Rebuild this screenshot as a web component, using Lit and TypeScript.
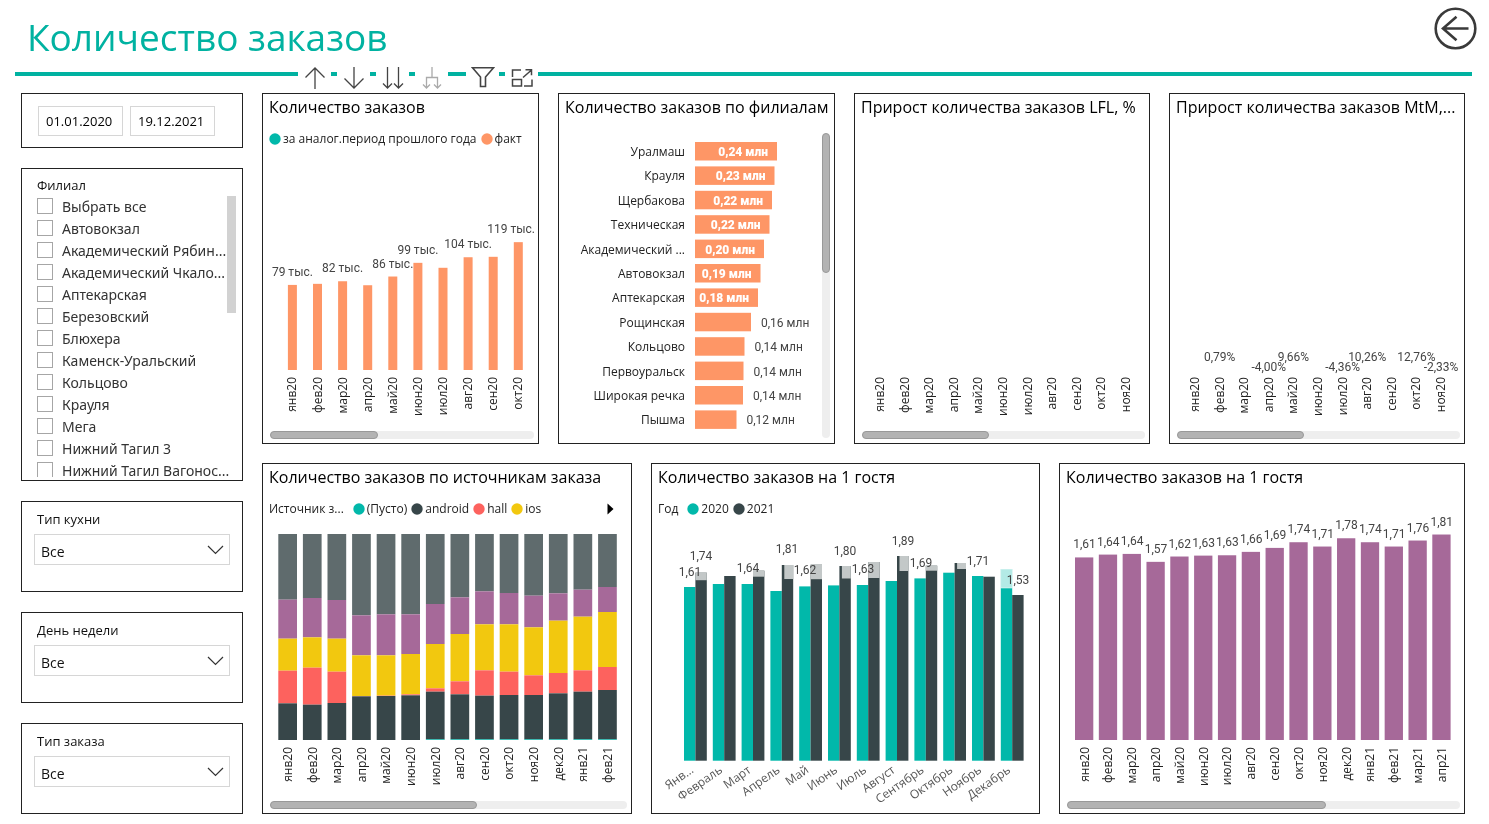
import { LitElement, html, svg, css, nothing } from "lit";
import { customElement, property } from "lit/decorators.js";
import { styleMap } from "lit/directives/style-map.js";

const MONTHS = [
  "янв20", "фев20", "мар20", "апр20", "май20", "июн20", "июл20", "авг20",
  "сен20", "окт20", "ноя20", "дек20", "янв21", "фев21", "мар21", "апр21",
];

const TEAL = "#01b8aa";
const DARK = "#374649";
const RED = "#fd625e";
const YELLOW = "#f2c80f";
const GRAY = "#5f6b6d";
const PURPLE = "#a66999";
const ORANGE = "#fe9666";

const BRANCHES = [
  "Выбрать все", "Автовокзал", "Академический Рябин...", "Академический Чкало...",
  "Аптекарская", "Березовский", "Блюхера", "Каменск-Уральский", "Кольцово",
  "Крауля", "Мега", "Нижний Тагил 3", "Нижний Тагил Вагонос...",
];

const ORDERS = [79, 80, 82.4, 78.7, 86.8, 99.5, 94.9, 104.7, 105.1, 118.7];
const ORDER_LABELS: Record<number, string> = {
  0: "79 тыс.", 2: "82 тыс.", 4: "86 тыс.", 5: "99 тыс.", 7: "104 тыс.", 9: "119 тыс.",
};

const BY_BRANCH: [string, string, number][] = [
  ["Уралмаш", "0,24 млн", 82], ["Крауля", "0,23 млн", 79.5], ["Щербакова", "0,22 млн", 77],
  ["Техническая", "0,22 млн", 74.5], ["Академический ...", "0,20 млн", 69],
  ["Автовокзал", "0,19 млн", 65.5], ["Аптекарская", "0,18 млн", 63], ["Рощинская", "0,16 млн", 56],
  ["Кольцово", "0,14 млн", 49.5], ["Первоуральск", "0,14 млн", 48.5],
  ["Широкая речка", "0,14 млн", 48], ["Пышма", "0,12 млн", 41.5],
];

const MTM: Record<number, string> = {
  1: "0,79%", 3: "-4,00%", 4: "9,66%", 6: "-4,36%", 7: "10,26%", 9: "12,76%", 10: "-2,33%",
};

const SOURCE_COLORS = [GRAY, PURPLE, YELLOW, RED, DARK, TEAL];
const SOURCES = [
  [197, 117, 96, 98, 110, 0], [192, 118, 91, 111, 106, 0], [198, 116, 99, 94, 111, 0],
  [244, 120, 122, 1, 131, 0], [241, 123, 121, 1, 132, 0], [241, 119, 121, 3, 134, 0],
  [210, 120, 133, 10, 143, 2], [190, 110, 142, 39, 135, 2], [172, 99, 138, 76, 131, 2],
  [177, 94, 142, 70, 133, 2], [185, 95, 144, 59, 133, 2], [178, 82, 157, 61, 138, 2],
  [167, 81, 161, 64, 143, 2], [159, 75, 165, 69, 148, 2],
];

interface YearPair {
  month: string;
  prev: number;
  cur: number;
  fade?: number;
  sliver?: boolean;
}
const YEARS: YearPair[] = [
  { month: "Янв...", prev: 173.7, cur: 188, fade: 7.5 },
  { month: "Февраль", prev: 176.7, cur: 184.7 },
  { month: "Март", prev: 176.7, cur: 190, fade: 6 },
  { month: "Апрель", prev: 169.7, cur: 195.7, fade: 14, sliver: true },
  { month: "Май", prev: 174.3, cur: 196, fade: 14.5 },
  { month: "Июнь", prev: 175.3, cur: 194.7, fade: 12.5, sliver: true },
  { month: "Июль", prev: 175.7, cur: 198.7, fade: 16 },
  { month: "Август", prev: 179.7, cur: 204.7, fade: 15, sliver: true },
  { month: "Сентябрь", prev: 182.3, cur: 195, fade: 5 },
  { month: "Октябрь", prev: 188, cur: 197.7, fade: 6, sliver: true },
  { month: "Ноябрь", prev: 184.7, cur: 184 },
  { month: "Декабрь", prev: 191.7, cur: 165.7 },
];
const YEAR_LABELS: [string, number, number][] = [
  ["1,61", 38, 53], ["1,74", 49, 37], ["1,64", 96, 49], ["1,81", 135, 30], ["1,62", 153, 51],
  ["1,80", 193, 32], ["1,63", 211, 50], ["1,89", 251, 22], ["1,69", 269, 44], ["1,71", 326, 42],
  ["1,53", 366, 61],
];

const PER_GUEST = [
  1.61, 1.635, 1.641, 1.571, 1.618, 1.626, 1.629, 1.659, 1.694, 1.744, 1.706, 1.779, 1.744, 1.706,
  1.759, 1.812,
];
const PER_GUEST_LABELS = [
  "1,61", "1,64", "1,64", "1,57", "1,62", "1,63", "1,63", "1,66", "1,69", "1,74", "1,71", "1,78",
  "1,74", "1,71", "1,76", "1,81",
];

const monthAxis = (count: number, first: number, step: number, y: number) =>
  MONTHS.slice(0, count).map((m, i) => {
    const x = first + i * step + 4;
    return svg`<text class="axis" text-anchor="end" transform="translate(${x} ${y}) rotate(-90)">${m}</text>`;
  });

@customElement("chart-panel")
export class ChartPanel extends LitElement {
  @property() heading = "";
  @property({ type: Number }) thumb = 0;

  static styles = css`
    :host {
      display: flex;
      flex-direction: column;
      min-width: 0;
      min-height: 351px;
      box-sizing: border-box;
      border: 1px solid #222;
      background: #fff;
    }
    .heading {
      margin: 0;
      padding: 0 2px 0 6px;
      font-size: 16px;
      font-weight: 400;
      line-height: 26px;
      white-space: nowrap;
      overflow: hidden;
      text-overflow: ellipsis;
      color: #000;
    }
    .body {
      flex: 1;
      min-height: 0;
    }
    .track {
      height: 8px;
      margin: 0 4px 4px 7px;
      border-radius: 4px;
      background: #eee;
    }
    .thumb {
      height: 8px;
      box-sizing: border-box;
      border: 1px solid #999;
      border-radius: 4px;
      background: #b3b3b3;
    }
  `;

  render() {
    return html`
      <h2 class="heading">${this.heading}</h2>
      <div class="body"><slot></slot></div>
      ${this.thumb
        ? html`<div class="track">
            <div class="thumb" style=${styleMap({ width: `${this.thumb}%` })}></div>
          </div>`
        : nothing}
    `;
  }
}

@customElement("app-root")
export class AppRoot extends LitElement {
  static styles = css`
    :host {
      display: block;
      background: #fff;
      color: #000;
      font-family: "Open Sans", "Noto Sans", sans-serif;
    }
    * {
      box-sizing: border-box;
    }
    button {
      padding: 0;
      border: 0;
      background: none;
      cursor: pointer;
    }
    svg {
      display: block;
    }
    .head {
      display: flex;
      justify-content: space-between;
      align-items: flex-start;
      height: 66px;
      padding: 7px 12px 0 27px;
    }
    .title {
      margin: 0;
      font-size: 37px;
      font-weight: 400;
      line-height: 60px;
      color: #00b2a1;
      white-space: nowrap;
    }
    .back {
      width: 43px;
      height: 43px;
    }
    .tools {
      display: flex;
      align-items: flex-start;
      height: 27px;
      padding: 0 17px 0 15px;
    }
    .rule {
      width: 6px;
      height: 4px;
      margin-top: 6px;
      background: #00b2a1;
    }
    .rule.lead {
      width: 283px;
    }
    .rule.wide {
      width: 18px;
    }
    .rule.fill {
      flex: 1;
    }
    .tool {
      display: flex;
      justify-content: center;
      width: 33px;
      height: 24px;
    }
    .layout {
      display: grid;
      grid-template-columns: 222px minmax(0, 1fr);
      gap: 19px;
      padding: 0 24px 10px 21px;
    }
    .side {
      display: flex;
      flex-direction: column;
      gap: 20px;
    }
    .card {
      border: 1px solid #222;
      background: #fff;
    }
    .dates {
      display: flex;
      gap: 7px;
      padding: 12px 16px 11px;
    }
    .date {
      width: 85px;
      height: 30px;
      padding: 0 7px;
      border: 1px solid #d6d6d6;
      font: 13px "Open Sans", "Noto Sans", sans-serif;
      color: #000;
      background: #fff;
    }
    .branches {
      position: relative;
      height: 313px;
      padding: 8px 4px 3px 15px;
    }
    .branches fieldset {
      height: 100%;
      margin: 0;
      padding: 0;
      border: 0;
      min-width: 0;
      overflow: hidden;
    }
    .caption {
      display: block;
      padding: 0;
      font-size: 13px;
      line-height: 16px;
      color: #111;
    }
    .options {
      padding-top: 3px;
    }
    .option {
      display: flex;
      align-items: center;
      gap: 9px;
      height: 22px;
      font-family: "Noto Sans", "Open Sans", sans-serif;
      font-size: 14px;
      line-height: 22px;
      color: #333;
      white-space: nowrap;
    }
    .option input {
      appearance: none;
      flex: none;
      width: 16px;
      height: 16px;
      margin: 0 0 2px;
      border: 1px solid #a6a6a6;
      background: #fff;
    }
    .grip {
      position: absolute;
      top: 27px;
      right: 6px;
      width: 9px;
      height: 117px;
      background: #d2d2d2;
      mix-blend-mode: multiply;
    }
    .filter {
      height: 91px;
      padding: 9px 12px 0;
    }
    .filter .caption {
      padding: 0 3px;
    }
    .picker {
      display: grid;
      align-items: center;
      margin-top: 7px;
    }
    .picker select,
    .picker svg {
      grid-area: 1 / 1;
    }
    .picker svg {
      justify-self: end;
      margin-right: 6px;
      pointer-events: none;
    }
    .picker select {
      appearance: none;
      width: 100%;
      height: 31px;
      padding: 3px 6px 0;
      border: 1px solid #d6d6d6;
      border-radius: 0;
      background: #fff;
      font: 14px "Open Sans", "Noto Sans", sans-serif;
      color: #111;
    }
    .charts {
      display: flex;
      flex-direction: column;
      gap: 19px;
      min-width: 0;
    }
    .row {
      display: grid;
      gap: 19px;
    }
    .row.top {
      grid-template-columns: 277fr 277fr 296fr 296fr;
    }
    .row.bottom {
      grid-template-columns: 370fr 389fr 406fr;
    }
    .legend {
      display: flex;
      align-items: center;
      height: 20px;
      margin: 9px 6px 0;
      font-size: 12px;
      line-height: 20px;
      color: #222;
      white-space: nowrap;
    }
    .key {
      display: flex;
      align-items: center;
      gap: 2px;
      margin-right: 4px;
    }
    .key svg {
      flex: none;
    }
    .legend-name {
      margin-right: 9px;
    }
    .next {
      margin-left: auto;
      padding: 0 11px;
    }
    .plot {
      width: 100%;
      height: auto;
      overflow: visible;
    }
    .split {
      display: flex;
      height: 100%;
      padding-right: 4px;
    }
    .split .plot {
      flex: 1;
      min-width: 0;
      align-self: flex-start;
    }
    .vtrack {
      width: 8px;
      margin: 13px 0 5px;
      border-radius: 4px;
      background: #eee;
    }
    .vthumb {
      height: 46%;
      border: 1px solid #999;
      border-radius: 4px;
      background: #b3b3b3;
    }
    .axis {
      font-size: 12px;
      fill: #222;
    }
    .slant {
      font-size: 12px;
      fill: #555;
    }
    .value {
      font-family: Roboto, "Open Sans", sans-serif;
      font-size: 12px;
      fill: #444;
    }
    .inside {
      font-weight: 900;
      fill: #fff;
    }
  `;

  private key(color: string, text: string) {
    return html`<span class="key">
      <svg width="12" height="12" viewBox="0 0 12 12"><circle cx="6" cy="6" r="5.7" fill=${color} /></svg>
      ${text}
    </span>`;
  }

  private tool(label: string, shape: unknown) {
    return html`<button class="tool" type="button" aria-label=${label}>
      <svg width="24" height="24" viewBox="0 0 24 24" fill="none" stroke="#444" stroke-width="1.3">${shape}</svg>
    </button>`;
  }

  private toolbar() {
    const gap = html`<span class="rule"></span>`;
    return html`<div class="tools">
      <span class="rule lead"></span>
      ${this.tool("Вверх", svg`<path d="M12 23V2M2.5 11.5L12 2l9.500 9.500" />`)}
      ${gap}
      ${this.tool("Вниз", svg`<path d="M12 1v21M2.500 12.500L12 22l9.500-9.500" />`)}
      ${gap}
      ${this.tool("Следующий уровень", svg`<path d="M6.500 1v21M2 17.500L6.500 22l4.500-4.500M17.500 1v21M13 17.500l4.500 4.500 4.500-4.500" />`)}
      ${gap}
      ${this.tool("Развернуть уровень", svg`<path stroke="#aaa" d="M12 1v10M6.500 22V11.500h11V22M3 18.500L6.500 22l3.500-3.500M14 18.500l3.500 3.500 3.500-3.500" />`)}
      <span class="rule wide"></span>
      ${this.tool("Фильтры", svg`<path stroke-width="1.600" d="M1.500 1.800h21l-8 9.200v9.500h-5V11z" />`)}
      ${gap}
      ${this.tool("Режим фокусировки", svg`<path stroke-width="1.500" d="M11 4H2.500v7M2.500 13.500h9v6.500h-9zM14 20h8v-6.500M13 11.500L21.500 4M15.500 3.800h6v5.500" />`)}
      <span class="rule fill"></span>
    </div>`;
  }

  private filter(id: string, label: string) {
    return html`<section class="card filter">
      <label class="caption" for=${id}>${label}</label>
      <div class="picker">
        <select id=${id}><option>Все</option></select>
        <svg width="17" height="10" viewBox="0 0 17 10" fill="none" stroke="#333" stroke-width="1.200"><path d="M1 1l7.500 7.500L16 1" /></svg>
      </div>
    </section>`;
  }

  private ordersChart() {
    const base = 221;
    const first = 29.4;
    const step = 25.1;
    return html`<svg class="plot" viewBox="0 0 275 279">
      ${ORDERS.map((v, i) => {
        const h = v * 1.077;
        return svg`<rect x=${first + i * step - 4.5} y=${base - h} width="9" height=${h} fill=${ORANGE} />`;
      })}
      ${Object.entries(ORDER_LABELS).map(([k, text]) => {
        const i = Number(k);
        const y = base - ORDERS[i] * 1.077 - 9;
        const last = i === ORDERS.length - 1;
        return svg`<text class="value" x=${last ? 272 : first + i * step} y=${y} text-anchor=${last ? "end" : "middle"}>${text}</text>`;
      })}
      ${monthAxis(10, first, step, 228)}
    </svg>`;
  }

  private branchChart() {
    return html`<div class="split">
      <svg class="plot" viewBox="0 0 263 312">
        ${BY_BRANCH.map(([name, text, w], i) => {
          const y = 31 + i * 24.4;
          const inside = i < 7;
          return svg`
            <text class="axis" x="126" y=${y + 5} text-anchor="end">${name}</text>
            <rect x="136" y=${y - 9} width=${w} height="18.500" fill=${ORANGE} />
            <text class=${inside ? "value inside" : "value"} x=${inside ? 136 + w - 9 : 136 + w + 10} y=${y + 5}
              text-anchor=${inside ? "end" : "start"}>${text}</text>`;
        })}
      </svg>
      <div class="vtrack"><div class="vthumb"></div></div>
    </div>`;
  }

  private growthChart(labels: Record<number, string>) {
    const first = 25;
    const step = 24.6;
    return html`<svg class="plot" viewBox="0 0 294 308">
      ${Object.entries(labels).map(([k, text]) => svg`<text class="value" text-anchor="middle"
        x=${first + Number(k) * step} y=${text.startsWith("-") ? 251 : 241}>${text}</text>`)}
      ${monthAxis(11, first, step, 257)}
    </svg>`;
  }

  private sourcesChart() {
    const step = 24.6;
    return html`<svg class="plot" viewBox="0 0 368 279">
      ${SOURCES.map((parts, i) => {
        const total = parts.reduce((a, b) => a + b, 0);
        let y = 15;
        return parts.map((p, k) => {
          const h = (p / total) * 206;
          const top = y;
          y += h;
          return svg`<rect x=${15.3 + i * step} y=${top} width="18.700" height=${h} fill=${SOURCE_COLORS[k]} />`;
        });
      })}
      ${monthAxis(14, 25, step, 228)}
    </svg>`;
  }

  private yearsChart() {
    const base = 241.7;
    const w = 11.4;
    return html`<svg class="plot" viewBox="0 0 387 292">
      ${YEARS.map((d, i) => {
        const x = 32 + i * 28.8;
        const inset = d.sliver ? 2.5 : 0;
        const top = base - d.cur;
        return svg`
          <rect x=${x} y=${base - d.prev} width=${w} height=${d.prev} fill=${TEAL} />
          <rect x=${x + w} y=${top} width=${w} height=${d.cur} fill=${DARK} />
          ${d.fade ? svg`<rect x=${x + w + inset} y=${top} width=${w - inset} height=${d.fade} fill="#c3c8c8" />` : nothing}
          ${i === 11 ? svg`<rect x=${x} y=${base - d.prev} width=${w} height="19" fill="#b3eae6" stroke="#fff" stroke-width="0.500" />` : nothing}
          <text class="slant" text-anchor="end" transform="translate(${x + w - 1} ${base + 11}) rotate(-35)">${d.month}</text>`;
      })}
      ${YEAR_LABELS.map(([text, x, y]) => svg`<text class="value" text-anchor="middle" x=${x} y=${y + 4}>${text}</text>`)}
    </svg>`;
  }

  private perGuestChart() {
    const base = 250;
    const step = 23.82;
    return html`<svg class="plot" viewBox="0 0 404 308">
      ${PER_GUEST.map((v, i) => {
        const h = v * 113.4;
        const x = 15 + i * step;
        return svg`<rect x=${x} y=${base - h} width="18.300" height=${h} fill=${PURPLE} />
          <text class="value" text-anchor="middle" x=${x + 9.5} y=${base - h - 9}>${PER_GUEST_LABELS[i]}</text>`;
      })}
      ${monthAxis(16, 24.5, step, 257)}
    </svg>`;
  }

  render() {
    return html`
      <header>
        <div class="head">
          <h1 class="title">Количество заказов</h1>
          <button class="back" type="button" aria-label="Назад">
            <svg width="43" height="43" viewBox="0 0 43 43" fill="none" stroke="#3a3a3a" stroke-width="2.600">
              <circle cx="21.500" cy="21.500" r="19.800" />
              <path d="M34.500 21.500H9M22.500 9.800L9 21.500l13.500 11.700" />
            </svg>
          </button>
        </div>
        ${this.toolbar()}
      </header>
      <main class="layout">
        <aside class="side">
          <section class="card dates">
            <input class="date" type="text" aria-label="Начало периода" value="01.01.2020" />
            <input class="date" type="text" aria-label="Конец периода" value="19.12.2021" />
          </section>
          <section class="card branches">
            <fieldset>
              <legend class="caption">Филиал</legend>
              <div class="options">
                ${BRANCHES.map((b) => html`<label class="option"><input type="checkbox" />${b}</label>`)}
              </div>
            </fieldset>
            <div class="grip"></div>
          </section>
          ${this.filter("kitchen", "Тип кухни")} ${this.filter("weekday", "День недели")}
          ${this.filter("order-type", "Тип заказа")}
        </aside>
        <div class="charts">
          <div class="row top">
            <chart-panel heading="Количество заказов" .thumb=${41}>
              <div class="legend">
                ${this.key(TEAL, "за аналог.период прошлого года")} ${this.key(ORANGE, "факт")}
              </div>
              ${this.ordersChart()}
            </chart-panel>
            <chart-panel heading="Количество заказов по филиалам">${this.branchChart()}</chart-panel>
            <chart-panel heading="Прирост количества заказов LFL, %" .thumb=${45}>
              ${this.growthChart({})}
            </chart-panel>
            <chart-panel heading="Прирост количества заказов MtM,..." .thumb=${45}>
              ${this.growthChart(MTM)}
            </chart-panel>
          </div>
          <div class="row bottom">
            <chart-panel heading="Количество заказов по источникам заказа" .thumb=${58}>
              <div class="legend">
                <span class="legend-name">Источник з...</span>
                ${this.key(TEAL, "(Пусто)")} ${this.key(DARK, "android")} ${this.key(RED, "hall")}
                ${this.key(YELLOW, "ios")}
                <button class="next" type="button" aria-label="Далее">
                  <svg width="7" height="12" viewBox="0 0 7 12"><path d="M0.500 0.500L6.500 6l-6 5.500z" /></svg>
                </button>
              </div>
              ${this.sourcesChart()}
            </chart-panel>
            <chart-panel heading="Количество заказов на 1 гостя">
              <div class="legend">
                <span class="legend-name">Год</span>
                ${this.key(TEAL, "2020")} ${this.key(DARK, "2021")}
              </div>
              ${this.yearsChart()}
            </chart-panel>
            <chart-panel heading="Количество заказов на 1 гостя" .thumb=${66}>
              ${this.perGuestChart()}
            </chart-panel>
          </div>
        </div>
      </main>
    `;
  }
}
